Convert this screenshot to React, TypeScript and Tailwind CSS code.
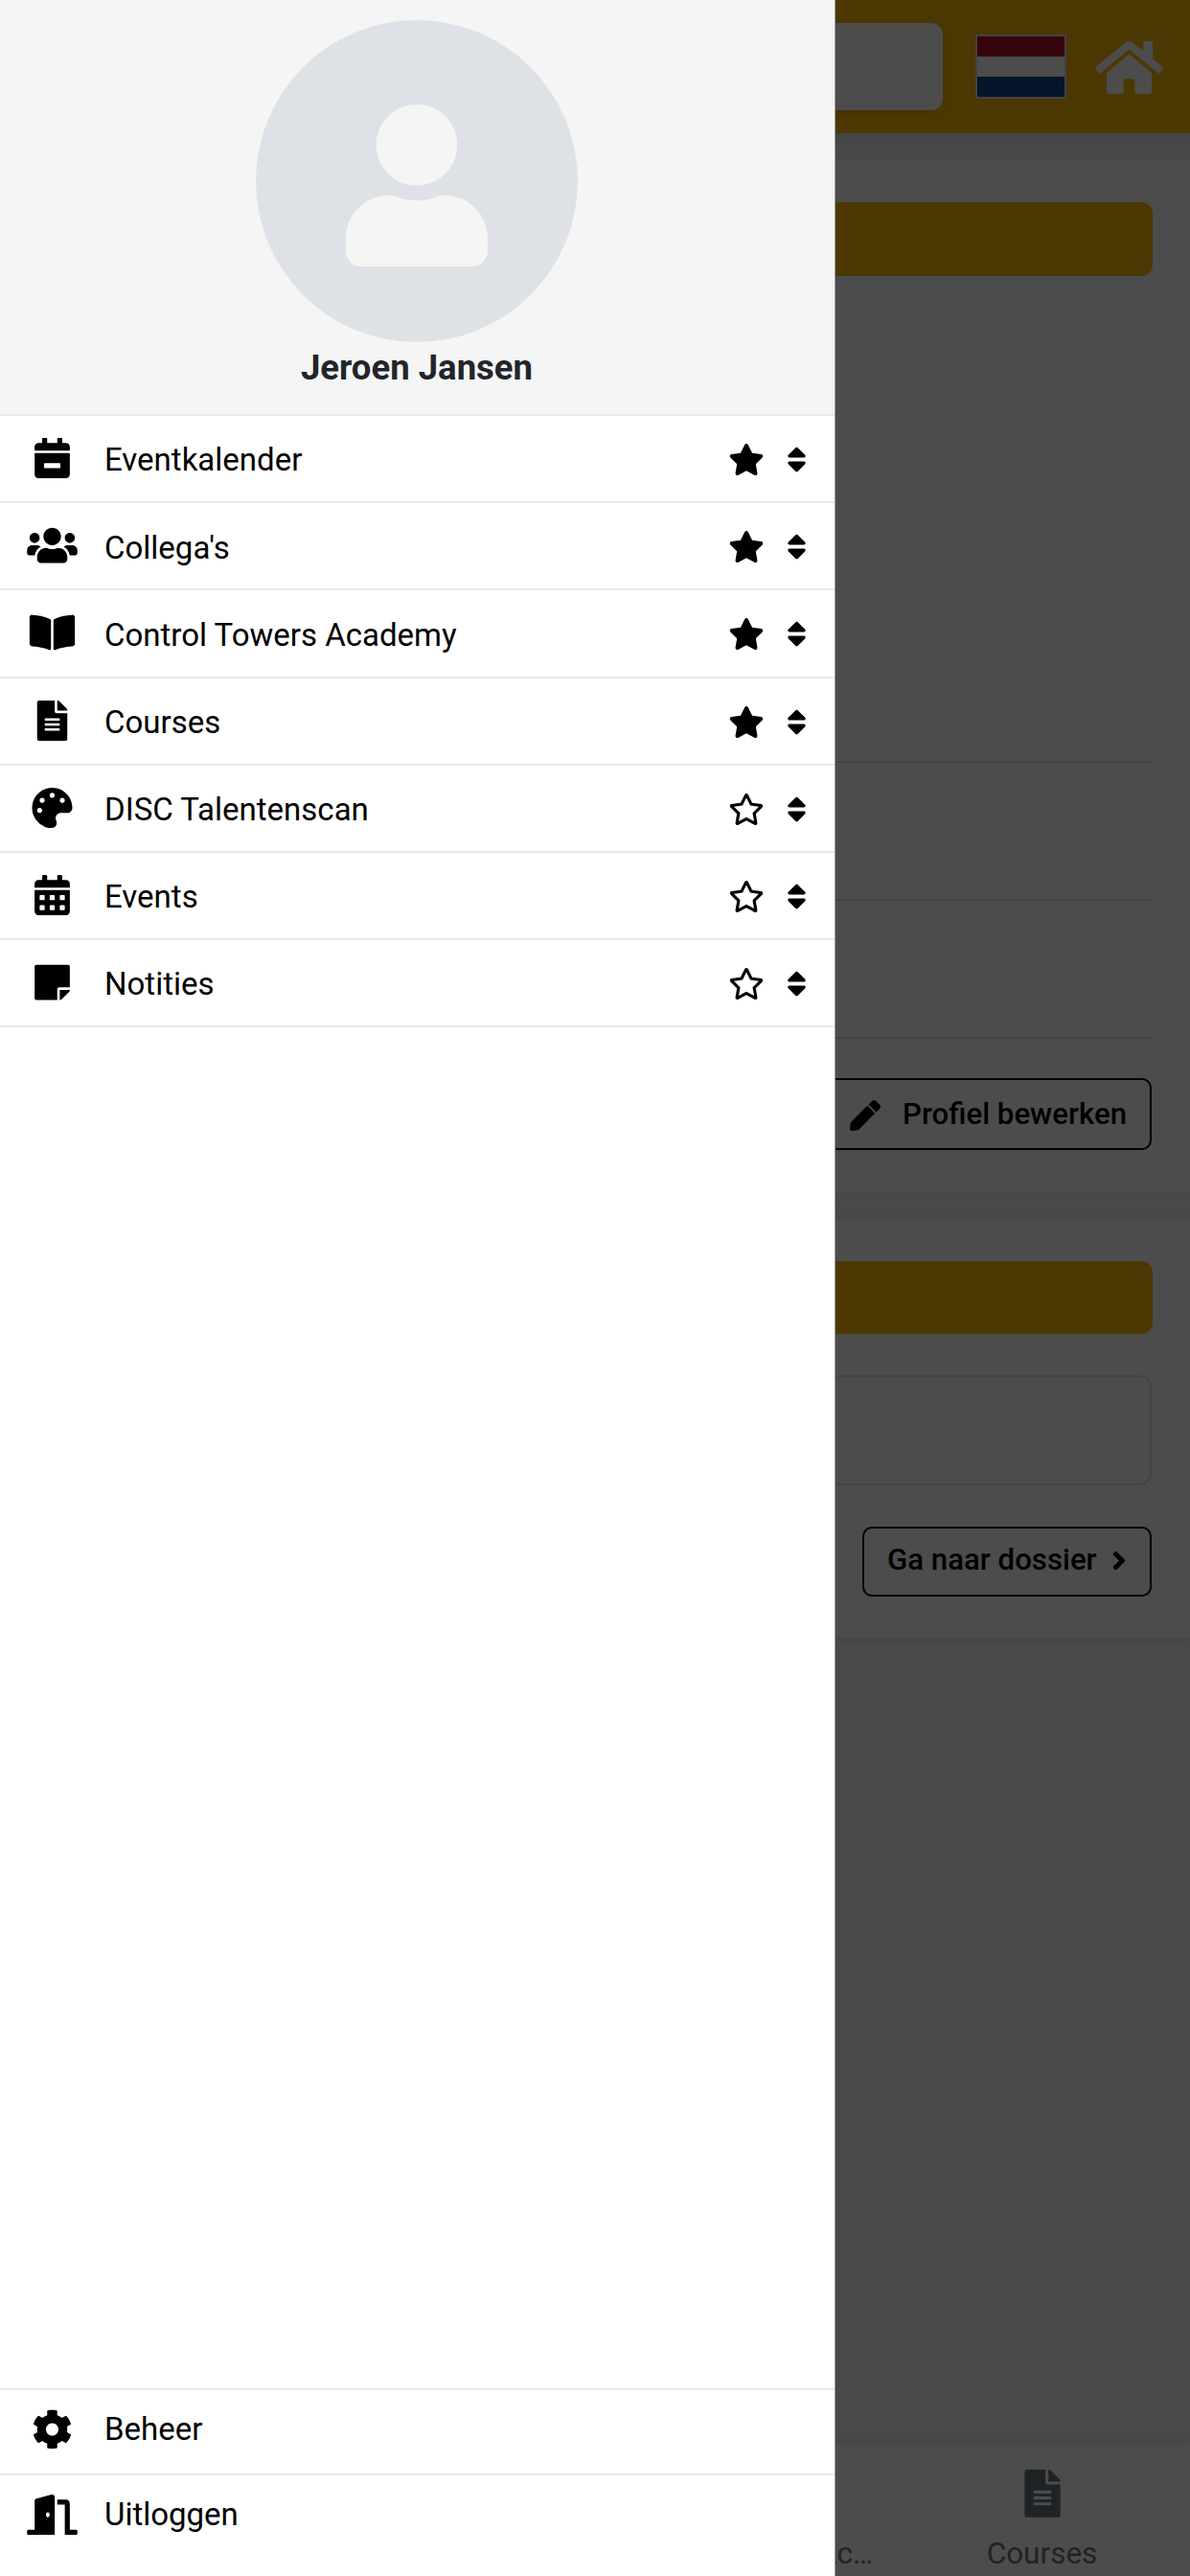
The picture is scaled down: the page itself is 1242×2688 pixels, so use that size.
import type { IconType } from 'react-icons';
import {
  FaAngleRight,
  FaBookOpen,
  FaCalendarAlt,
  FaCalendarMinus,
  FaCog,
  FaDoorOpen,
  FaFileAlt,
  FaHome,
  FaPalette,
  FaPen,
  FaRegStar,
  FaSort,
  FaStar,
  FaStickyNote,
  FaUser,
  FaUsers,
} from 'react-icons/fa';

type MenuItem = {
  label: string;
  icon: IconType;
  favorite: boolean;
};

const menuItems: MenuItem[] = [
  { label: 'Eventkalender', icon: FaCalendarMinus, favorite: true },
  { label: "Collega's", icon: FaUsers, favorite: true },
  { label: 'Control Towers Academy', icon: FaBookOpen, favorite: true },
  { label: 'Courses', icon: FaFileAlt, favorite: true },
  { label: 'DISC Talentenscan', icon: FaPalette, favorite: false },
  { label: 'Events', icon: FaCalendarAlt, favorite: false },
  { label: 'Notities', icon: FaStickyNote, favorite: false },
];

function MenuRow({ label, icon: Icon, favorite }: MenuItem) {
  const Star = favorite ? FaStar : FaRegStar;
  return (
    <li className="flex h-[91.2px] items-center border-b-2 border-[#e9e9e9] pl-7 pr-[29px]">
      <Icon className="mb-px h-[42px] w-[53px]" />
      <span className="ml-7 flex-1 pt-[3px]">{label}</span>
      <button className="mr-[23px] pt-0.5" aria-label="Favoriet">
        <Star className="h-[33px] w-[38px]" />
      </button>
      <button className="pt-0.5" aria-label="Sorteren">
        <FaSort className="h-[33px] w-[21px]" />
      </button>
    </li>
  );
}

function FooterRow({ label, icon: Icon }: { label: string; icon: IconType }) {
  return (
    <li className="flex h-[89px] items-center border-t-2 border-[#e9e9e9] pl-7">
      <Icon className="mb-[5px] h-[42px] w-[53px]" />
      <span className="ml-7 pb-1.5">{label}</span>
    </li>
  );
}

function Drawer() {
  return (
    <aside className="absolute inset-y-0 left-0 flex w-[872px] flex-col border-r border-[#999] bg-white text-[33px] text-black">
      <header className="flex h-[434px] shrink-0 flex-col items-center border-b-2 border-[#e9e9e9] bg-[#f5f5f5] pr-px pt-[21px]">
        <div className="flex h-[336px] w-[336px] items-center justify-center rounded-full bg-[#dee2e6] pt-2">
          <FaUser className="h-[169px] w-[148px] text-[#f5f5f5]" />
        </div>
        <h1 className="mt-[5px] text-[36.5px] font-bold leading-[44px] text-[#212529]">
          Jeroen Jansen
        </h1>
      </header>
      <ul className="flex-1">
        {menuItems.map((item) => (
          <MenuRow key={item.label} {...item} />
        ))}
      </ul>
      <ul className="pb-[18px]">
        <FooterRow label="Beheer" icon={FaCog} />
        <FooterRow label="Uitloggen" icon={FaDoorOpen} />
      </ul>
    </aside>
  );
}

function TopBar() {
  return (
    <header className="relative flex h-[139px] items-center bg-[#fcbb07] pr-7 shadow-[0_6px_18px_rgba(0,0,0,0.12)]">
      <div className="ml-7 h-[91px] flex-1 rounded-xl bg-white shadow-[0_4px_14px_rgba(0,0,0,0.1)]" />
      <div className="ml-[34px] flex h-[67px] w-[95px] flex-col border-2 border-[#dcdcdc]">
        <div className="flex-1 bg-[#b5112a]" />
        <div className="flex-1 bg-white" />
        <div className="flex-1 bg-[#17448f]" />
      </div>
      <FaHome className="ml-[30px] mt-0.5 h-[63px] w-[71px] text-white" />
    </header>
  );
}

function Page() {
  return (
    <div className="flex h-full flex-col bg-[#f5f5f5]">
      <TopBar />
      <section className="mt-7 flex h-[1077px] flex-col bg-white pl-10 pr-[39px] pt-11 shadow-[0_0_12px_rgba(0,0,0,0.1)]">
        <div className="h-[77px] shrink-0 rounded-xl bg-[#fcbb07]" />
        <div className="h-[508px] shrink-0 border-b-2 border-[#e2e2e2]" />
        <div className="h-36 shrink-0 border-b-2 border-[#e2e2e2]" />
        <div className="h-36 shrink-0 border-b-2 border-[#e2e2e2]" />
        <button className="mr-px mt-[41px] flex h-[75px] shrink-0 items-center self-end rounded-[10px] border-2 border-black px-6 pt-0.5 text-[31.2px] font-medium">
          <FaPen className="mr-[23px] h-8 w-8" />
          Profiel bewerken
        </button>
      </section>
      <section className="mt-7 flex h-[437px] flex-col bg-white pl-10 pr-[39px] pt-11 shadow-[0_0_12px_rgba(0,0,0,0.1)]">
        <div className="h-[76px] shrink-0 rounded-xl bg-[#fcbb07]" />
        <div className="mr-px mt-[43px] h-[115px] shrink-0 rounded-xl border-2 border-[#e2e2e2]" />
        <button className="mr-px mt-[43px] flex h-[73px] w-[302px] shrink-0 items-center justify-between self-end rounded-[10px] border-2 border-black px-6 pb-0.5 text-[31.2px] font-medium">
          Ga naar dossier
          <FaAngleRight className="h-[31px] w-4" />
        </button>
      </section>
      <nav className="mt-auto flex h-[137px] justify-end bg-white text-[31.5px] text-[#6c757d] shadow-[0_0_12px_rgba(0,0,0,0.1)]">
        <div className="flex w-[310px] flex-col items-end pr-[22px] pt-[26px]">
          <FaBookOpen className="mr-[120px] h-[50px] w-14" />
          <span className="mt-3.5">Control Towers Ac…</span>
        </div>
        <div className="flex w-[309px] flex-col items-center pt-[26px]">
          <FaFileAlt className="h-[50px] w-[38px]" />
          <span className="mt-3.5">Courses</span>
        </div>
      </nav>
    </div>
  );
}

export default function App() {
  return (
    <div className="relative h-[2688px] w-[1242px] overflow-hidden font-[Roboto,sans-serif]">
      <Page />
      <div className="absolute inset-0 bg-black/70" />
      <Drawer />
    </div>
  );
}
